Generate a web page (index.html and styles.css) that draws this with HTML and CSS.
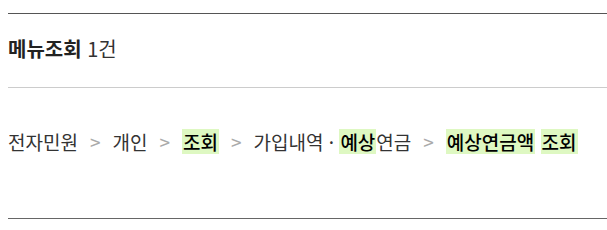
FILE: index.html
```html
<!DOCTYPE html>
<html lang="ko">
<head>
    <meta charset="UTF-8">
    <title>메뉴조회</title>
    <link rel="stylesheet" href="styles.css">
</head>
<body>
    <div class="result">
        <div class="result-head">
            <strong>메뉴조회</strong> 1건
        </div>
        <div class="path">
            <span>전자민원</span><span class="sep">&gt;</span><span>개인</span><span class="sep">&gt;</span><span class="hl">조회</span><span class="sep">&gt;</span><span>가입내역 · <span class="hl">예상</span>연금</span><span class="sep">&gt;</span><span class="hl">예상연금액</span> <span class="hl">조회</span>
        </div>
    </div>
</body>
</html>
```

FILE: styles.css
```css
body {
    margin: 0;
    padding: 13px 0 0 8px;
    font-family: "Noto Sans CJK KR", "Noto Sans", sans-serif;
    color: #333;
    background-color: #fff;
}

.result {
    border-top: 1px solid #555;
    border-bottom: 1px solid #666;
}

.result-head {
    font-size: 20px;
    line-height: 28px;
    padding: 21px 0 24px;
    border-bottom: 1px solid #ccc;
}

.result-head strong {
    font-weight: bold;
    color: #222;
}

.path {
    font-size: 19px;
    line-height: 28px;
    padding: 40px 0 62px;
    white-space: nowrap;
}

.sep {
    color: #aaa;
    margin: 0 12px;
}

.hl {
    display: inline-block;
    line-height: 25px;
    background-color: #def8c2;
    color: #000;
    font-weight: 500;
    padding: 0 1px;
}
```
